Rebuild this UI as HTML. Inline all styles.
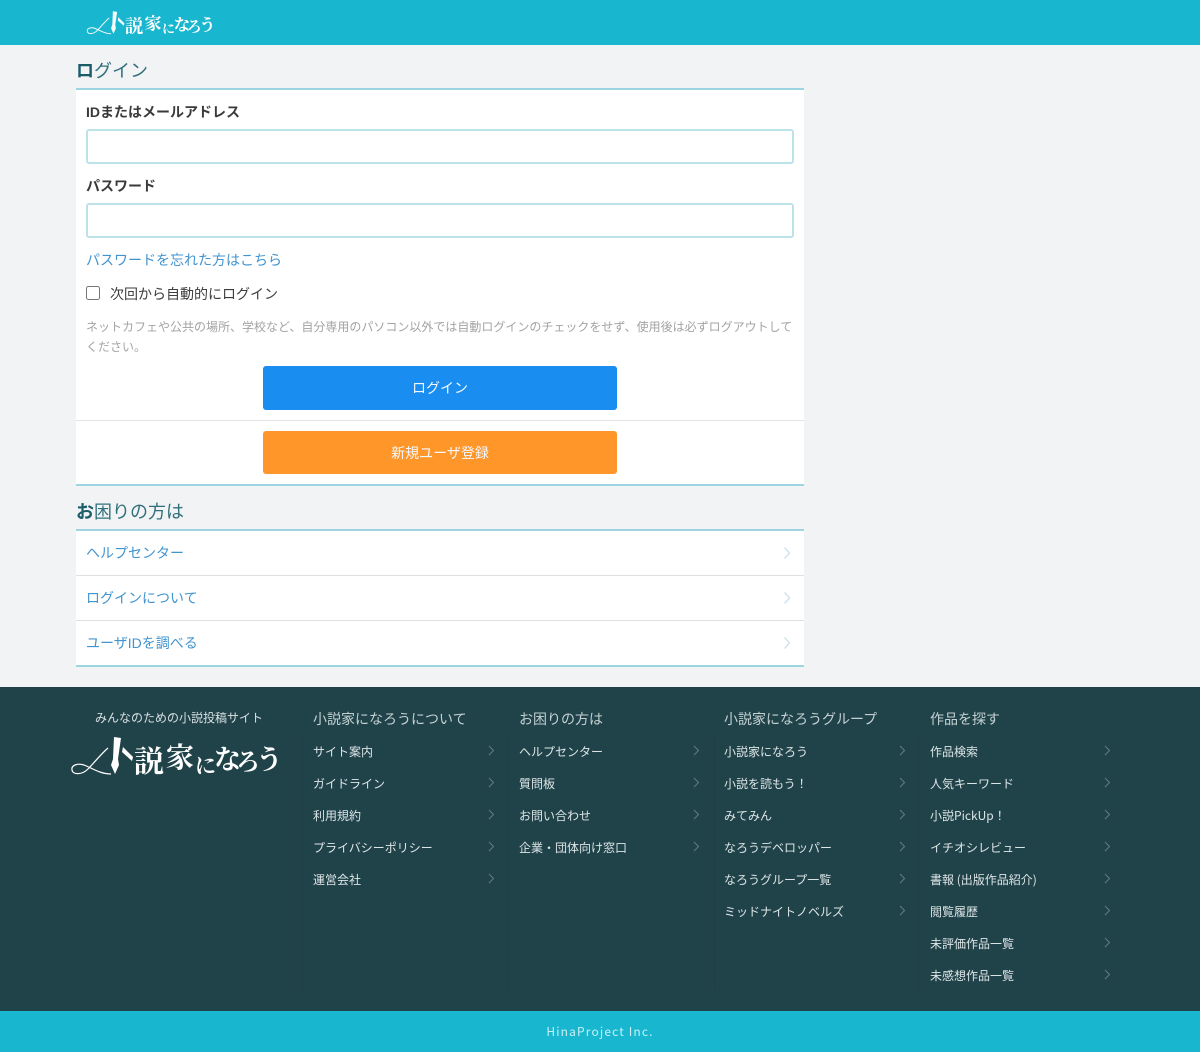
<!DOCTYPE html>
<html lang="ja"><head><meta charset="utf-8"><title>ログイン</title>
<style>
html,body{margin:0;padding:0;background:#f1f3f5}
body{position:relative;width:1200px;height:1052px;overflow:hidden;font-family:"Liberation Sans","Noto Sans CJK JP",sans-serif;font-size:14px;color:#333}
.a{position:absolute;display:block;box-sizing:border-box}
.t{position:absolute;white-space:nowrap;line-height:20px}
.h{font-size:18px;color:#31707b;line-height:26px}
.h b{color:#1a5d68;font-weight:700}
.lnk{color:#4194cf}
.lb{font-weight:700;color:#3a3a3a}
.in{position:absolute;left:86px;width:708px;height:35px;box-sizing:border-box;border:2px solid #bde3ea;border-radius:3px;background:#fff}
.btn{position:absolute;left:263px;width:354px;border-radius:3px;color:#f2f8fd;text-align:center;font-size:14px}
.ft{font-size:12px;color:#dde5e6}
.fh{font-size:14px;color:#c4d1d3}
.sep{position:absolute;top:735px;width:1px;background:#1e3f45}
svg{position:absolute;overflow:visible}
svg text{font-family:"Noto Serif CJK SC","Noto Serif CJK JP",serif;fill:#fff}
</style></head><body>
<div class="a" style="left:0;top:0;width:1200px;height:45px;background:#19b6cf"></div>

<svg style="left:86px;top:10px" width="128" height="28" viewBox="0 0 210 46">
<g fill="#f4fbfc">
<path d="M38 13C30 20 24 28 18 34C12 40 3 40 2 35C1 30 8 28 14 30C22 33 30 39 41 39" fill="none" stroke="#f4fbfc" stroke-width="1.600"/>
<path d="M44 2L51 3L48 24L49 30L45 39L41 30L43 24Z"/>
<path d="M53 12L63 22L62 26L52 17Z"/>
</g>
<text x="64" y="37" font-size="30" font-weight="700">説</text>
<text x="96" y="32" font-size="28" font-weight="700">家</text>
<text x="125" y="38" font-size="21" font-weight="700">に</text>
<text x="144" y="34" font-size="27" font-weight="700">な</text>
<text x="166" y="35" font-size="24" font-weight="700">ろ</text>
<text x="186" y="34" font-size="27" font-weight="700">う</text>
</svg>

<div class="t h" style="left:76px;top:58px"><b>ロ</b>グイン</div>
<div class="a" style="left:76px;top:88px;width:728px;height:398px;background:#fff;border-top:2px solid #9dd4e1;border-bottom:2px solid #9dd4e1"></div>
<div class="t lb" style="left:86px;top:102px">IDまたはメールアドレス</div>
<div class="in" style="top:129px"></div>
<div class="t lb" style="left:86px;top:176px">パスワード</div>
<div class="in" style="top:203px"></div>
<div class="t lnk" style="left:86px;top:250px">パスワードを忘れた方はこちら</div>
<input type="checkbox" style="position:absolute;left:86px;top:286px;width:14px;height:14px;margin:0">
<div class="t" style="left:110px;top:284px;color:#3d3d3d">次回から自動的にログイン</div>
<div class="a" style="left:86px;top:317px;width:708px;font-size:12px;line-height:20px;color:#a3a3a3">ネットカフェや公共の場所、学校など、自分専用のパソコン以外では自動ログインのチェックをせず、使用後は必ずログアウトしてください。</div>
<div class="btn" style="top:366px;height:44px;line-height:44px;background:#1a8df0">ログイン</div>
<div class="a" style="left:76px;top:420px;width:728px;height:1px;background:#e2e2e2"></div>
<div class="btn" style="top:431px;height:43px;line-height:45px;background:#ff962a">新規ユーザ登録</div>

<div class="t h" style="left:76px;top:499px"><b>お</b>困りの方は</div>
<div class="a" style="left:76px;top:529px;width:728px;height:138px;background:#fff;border-top:2px solid #9dd4e1;border-bottom:2px solid #9dd4e1"></div>
<div class="a" style="left:76px;top:575px;width:728px;height:1px;background:#e0e0e0"></div>
<div class="a" style="left:76px;top:620px;width:728px;height:1px;background:#e0e0e0"></div>
<div class="t lnk" style="left:86px;top:543px">ヘルプセンター</div>
<div class="t lnk" style="left:86px;top:588px">ログインについて</div>
<div class="t lnk" style="left:86px;top:633px">ユーザIDを調べる</div>
<svg style="left:784px;top:547px" width="8" height="13" fill="none" stroke="#d3e3ee" stroke-width="1.500"><path d="M.5 .5L5.500 6L.5 11.500"/></svg>
<svg style="left:784px;top:592px" width="8" height="13" fill="none" stroke="#d3e3ee" stroke-width="1.500"><path d="M.5 .5L5.500 6L.5 11.500"/></svg>
<svg style="left:784px;top:637px" width="8" height="13" fill="none" stroke="#d3e3ee" stroke-width="1.500"><path d="M.5 .5L5.500 6L.5 11.500"/></svg>

<div class="a" style="left:0;top:687px;width:1200px;height:324px;background:#20434a"></div>
<div class="t" style="left:95px;top:708px;font-size:12px;color:#d8e0e1">みんなのための小説投稿サイト</div>
<svg style="left:70px;top:735px" width="210" height="46" viewBox="0 0 210 46">
<g fill="#fff">
<path d="M38 13C30 20 24 28 18 34C12 40 3 40 2 35C1 30 8 28 14 30C22 33 30 39 41 39" fill="none" stroke="#fff" stroke-width="1.200"/>
<path d="M44 2L51 3L48 24L49 30L45 39L41 30L43 24Z"/>
<path d="M53 12L63 22L62 26L52 17Z"/>
</g>
<text x="64" y="37" font-size="30" font-weight="700">説</text>
<text x="96" y="32" font-size="28" font-weight="700">家</text>
<text x="125" y="38" font-size="21" font-weight="700">に</text>
<text x="144" y="34" font-size="27" font-weight="700">な</text>
<text x="166" y="35" font-size="24" font-weight="700">ろ</text>
<text x="186" y="34" font-size="27" font-weight="700">う</text>
</svg>

<div class="sep" style="left:302px;height:255px"></div>
<div class="sep" style="left:507px;height:255px"></div>
<div class="sep" style="left:714px;height:255px"></div>
<div class="sep" style="left:918px;height:255px"></div>

<svg style="left:0;top:0" width="1200" height="1052" fill="none" stroke="#5f7a7f" stroke-width="1.100">
<path d="M489 746L493.500 750.500L489 755M489 778L493.500 782.500L489 787M489 810L493.500 814.500L489 819M489 842L493.500 846.500L489 851M489 874L493.500 878.500L489 883"/>
<path d="M694 746L698.500 750.500L694 755M694 778L698.500 782.500L694 787M694 810L698.500 814.500L694 819M694 842L698.500 846.500L694 851"/>
<path d="M900 746L904.500 750.500L900 755M900 778L904.500 782.500L900 787M900 810L904.500 814.500L900 819M900 842L904.500 846.500L900 851M900 874L904.500 878.500L900 883M900 906L904.500 910.500L900 915"/>
<path d="M1105 746L1109.500 750.500L1105 755M1105 778L1109.500 782.500L1105 787M1105 810L1109.500 814.500L1105 819M1105 842L1109.500 846.500L1105 851M1105 874L1109.500 878.500L1105 883M1105 906L1109.500 910.500L1105 915M1105 938L1109.500 942.500L1105 947M1105 970L1109.500 974.500L1105 979"/>
</svg>

<div class="t fh" style="left:313px;top:709px">小説家になろうについて</div>
<div class="t ft" style="left:313px;top:742px">サイト案内</div>
<div class="t ft" style="left:313px;top:774px">ガイドライン</div>
<div class="t ft" style="left:313px;top:806px">利用規約</div>
<div class="t ft" style="left:313px;top:838px">プライバシーポリシー</div>
<div class="t ft" style="left:313px;top:870px">運営会社</div>

<div class="t fh" style="left:519px;top:709px">お困りの方は</div>
<div class="t ft" style="left:519px;top:742px">ヘルプセンター</div>
<div class="t ft" style="left:519px;top:774px">質問板</div>
<div class="t ft" style="left:519px;top:806px">お問い合わせ</div>
<div class="t ft" style="left:519px;top:838px">企業・団体向け窓口</div>

<div class="t fh" style="left:724px;top:709px">小説家になろうグループ</div>
<div class="t ft" style="left:724px;top:742px">小説家になろう</div>
<div class="t ft" style="left:724px;top:774px">小説を読もう！</div>
<div class="t ft" style="left:724px;top:806px">みてみん</div>
<div class="t ft" style="left:724px;top:838px">なろうデベロッパー</div>
<div class="t ft" style="left:724px;top:870px">なろうグループ一覧</div>
<div class="t ft" style="left:724px;top:902px">ミッドナイトノベルズ</div>

<div class="t fh" style="left:930px;top:709px">作品を探す</div>
<div class="t ft" style="left:930px;top:742px">作品検索</div>
<div class="t ft" style="left:930px;top:774px">人気キーワード</div>
<div class="t ft" style="left:930px;top:806px;font-family:'Noto Sans CJK JP',sans-serif">小説PickUp！</div>
<div class="t ft" style="left:930px;top:838px">イチオシレビュー</div>
<div class="t ft" style="left:930px;top:870px;font-family:'Noto Sans CJK JP',sans-serif">書報 (出版作品紹介)</div>
<div class="t ft" style="left:930px;top:902px">閲覧履歴</div>
<div class="t ft" style="left:930px;top:934px">未評価作品一覧</div>
<div class="t ft" style="left:930px;top:966px">未感想作品一覧</div>

<div class="a" style="left:0;top:1011px;width:1200px;height:41px;background:#19b6cf"></div>
<div class="t" style="left:0;top:1022px;width:1200px;text-align:center;font-size:12px;letter-spacing:1.150px;color:#c6f1f6;font-family:'Noto Sans CJK JP',sans-serif">HinaProject Inc.</div>
</body></html>
